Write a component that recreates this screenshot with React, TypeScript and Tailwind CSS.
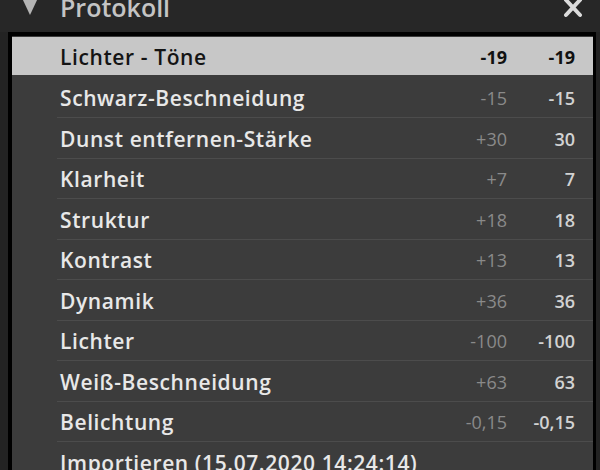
import React from "react";

type Step = { label: string; delta?: string; value?: string };

const steps: Step[] = [
  { label: "Lichter - Töne", delta: "-19", value: "-19" },
  { label: "Schwarz-Beschneidung", delta: "-15", value: "-15" },
  { label: "Dunst entfernen-Stärke", delta: "+30", value: "30" },
  { label: "Klarheit", delta: "+7", value: "7" },
  { label: "Struktur", delta: "+18", value: "18" },
  { label: "Kontrast", delta: "+13", value: "13" },
  { label: "Dynamik", delta: "+36", value: "36" },
  { label: "Lichter", delta: "-100", value: "-100" },
  { label: "Weiß-Beschneidung", delta: "+63", value: "63" },
  { label: "Belichtung", delta: "-0,15", value: "-0,15" },
  { label: "Importieren (15.07.2020 14:24:14)" },
];

export default function App() {
  return (
    <div
      className="flex h-[470px] w-[600px] flex-col overflow-hidden bg-[#232323]"
      style={{ fontFamily: '"Open Sans", "Noto Sans", sans-serif' }}
    >
      {/* ---------- Panel header ---------- */}
      <div className="flex h-[32px] shrink-0 items-start bg-[#272727] pl-[22px] pr-[17px]">
        <svg viewBox="0 0 16 16" className="h-[16px] w-[16px]">
          <polygon points="0,-2 16,-2 8,15" fill="#b4b4b4" />
        </svg>
        <span className="mt-[-5px] ml-[22px] text-[25px] leading-none font-semibold text-[#c4c4c4]">
          Protokoll
        </span>
        <svg viewBox="0 0 20 18" className="ml-auto h-[18px] w-[20px]">
          <path
            d="M3 0 L17 15 M17 0 L3 15"
            stroke="#dcdcdc"
            strokeWidth="4"
            strokeLinecap="round"
          />
        </svg>
      </div>

      {/* ---------- History list ---------- */}
      <div className="flex flex-1 pl-[8px] pr-[4px]">
        <div className="flex-1 border-t-[4px] border-r-[3px] border-l-[4px] border-black bg-[#3c3c3c] pt-[1px]">
          {steps.map((s, i) => {
            const active = i === 0;
            return (
              <div
                key={s.label}
                className={
                  active
                    ? "h-[40.5px] border-b-[3.5px] border-[#3c3c3c] bg-[#c7c7c7]"
                    : "h-[40.5px]"
                }
              >
                <div
                  className={`ml-[45px] flex h-full items-center pt-[3px] pr-[18px] pl-[3px] ${
                    active ? "" : "border-b border-[#4c4c4c]"
                  }`}
                >
                  <span
                    className={`flex-1 text-[21px] tracking-[0.6px] font-semibold ${
                      active ? "text-[#141414]" : "text-[#e8e8e8]"
                    }`}
                  >
                    {s.label}
                  </span>
                  {s.delta && (
                    <span
                      className={`text-right text-[18px] ${
                        active ? "font-bold text-[#111]" : "text-[#8a8a8a]"
                      }`}
                    >
                      {s.delta}
                    </span>
                  )}
                  {s.value && (
                    <span
                      className={`w-[68px] text-right text-[18px] ${
                        active
                          ? "font-bold text-[#111]"
                          : "font-semibold text-[#d2d2d2]"
                      }`}
                    >
                      {s.value}
                    </span>
                  )}
                </div>
              </div>
            );
          })}
        </div>
      </div>
    </div>
  );
}
